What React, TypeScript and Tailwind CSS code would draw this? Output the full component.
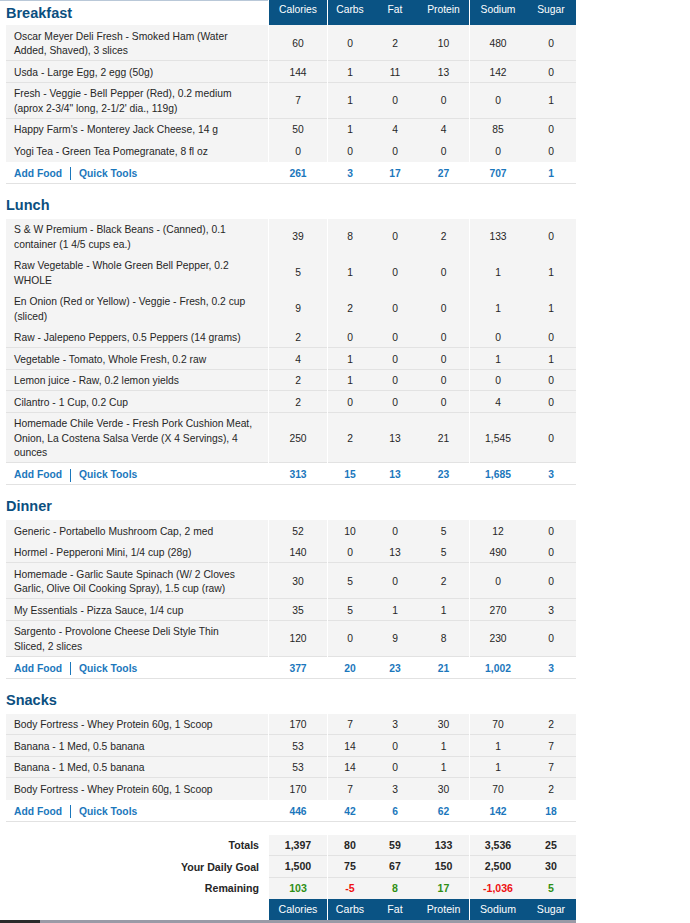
import React from 'react'

type Item = { name: string; v: (string | number)[]; line?: boolean }
type Meal = { title: string; items: Item[]; total: (string | number)[] }

const COLS = ['Calories', 'Carbs', 'Fat', 'Protein', 'Sodium', 'Sugar']

const meals: Meal[] = [
  {
    title: 'Breakfast',
    items: [
      { name: 'Oscar Meyer Deli Fresh - Smoked Ham (Water Added, Shaved), 3 slices', v: [60, 0, 2, 10, 480, 0], line: true },
      { name: 'Usda - Large Egg, 2 egg (50g)', v: [144, 1, 11, 13, 142, 0], line: true },
      { name: 'Fresh - Veggie - Bell Pepper (Red), 0.2 medium (aprox 2-3/4" long, 2-1/2\' dia., 119g)', v: [7, 1, 0, 0, 0, 1], line: true },
      { name: "Happy Farm's - Monterey Jack Cheese, 14 g", v: [50, 1, 4, 4, 85, 0] },
      { name: 'Yogi Tea - Green Tea Pomegranate, 8 fl oz', v: [0, 0, 0, 0, 0, 0] },
    ],
    total: [261, 3, 17, 27, 707, 1],
  },
  {
    title: 'Lunch',
    items: [
      { name: 'S & W Premium - Black Beans - (Canned), 0.1 container (1 4/5 cups ea.)', v: [39, 8, 0, 2, 133, 0] },
      { name: 'Raw Vegetable - Whole Green Bell Pepper, 0.2 WHOLE', v: [5, 1, 0, 0, 1, 1] },
      { name: 'En Onion (Red or Yellow) - Veggie - Fresh, 0.2 cup (sliced)', v: [9, 2, 0, 0, 1, 1] },
      { name: 'Raw - Jalepeno Peppers, 0.5 Peppers (14 grams)', v: [2, 0, 0, 0, 0, 0], line: true },
      { name: 'Vegetable - Tomato, Whole Fresh, 0.2 raw', v: [4, 1, 0, 0, 1, 1], line: true },
      { name: 'Lemon juice - Raw, 0.2 lemon yields', v: [2, 1, 0, 0, 0, 0], line: true },
      { name: 'Cilantro - 1 Cup, 0.2 Cup', v: [2, 0, 0, 0, 4, 0], line: true },
      { name: 'Homemade Chile Verde - Fresh Pork Cushion Meat, Onion, La Costena Salsa Verde (X 4 Servings), 4 ounces', v: [250, 2, 13, 21, '1,545', 0], line: true },
    ],
    total: [313, 15, 13, 23, '1,685', 3],
  },
  {
    title: 'Dinner',
    items: [
      { name: 'Generic - Portabello Mushroom Cap, 2 med', v: [52, 10, 0, 5, 12, 0] },
      { name: 'Hormel - Pepperoni Mini, 1/4 cup (28g)', v: [140, 0, 13, 5, 490, 0], line: true },
      { name: 'Homemade - Garlic Saute Spinach (W/ 2 Cloves Garlic, Olive Oil Cooking Spray), 1.5 cup (raw)', v: [30, 5, 0, 2, 0, 0], line: true },
      { name: 'My Essentials - Pizza Sauce, 1/4 cup', v: [35, 5, 1, 1, 270, 3], line: true },
      // nbsp keeps "Sliced, 2" together so the wrap falls where it does on the site
      { name: 'Sargento - Provolone Cheese Deli Style Thin Sliced,\u00a02 slices', v: [120, 0, 9, 8, 230, 0], line: true },
    ],
    total: [377, 20, 23, 21, '1,002', 3],
  },
  {
    title: 'Snacks',
    items: [
      { name: 'Body Fortress - Whey Protein 60g, 1 Scoop', v: [170, 7, 3, 30, 70, 2], line: true },
      { name: 'Banana - 1 Med, 0.5 banana', v: [53, 14, 0, 1, 1, 7], line: true },
      { name: 'Banana - 1 Med, 0.5 banana', v: [53, 14, 0, 1, 1, 7], line: true },
      { name: 'Body Fortress - Whey Protein 60g, 1 Scoop', v: [170, 7, 3, 30, 70, 2] },
    ],
    total: [446, 42, 6, 62, 142, 18],
  },
]

const totals = [1397, 80, 59, 133, 3536, 25].map((n) => n.toLocaleString('en-US'))
const goals = ['1,500', 75, 67, 150, '2,500', 30]
const remaining: { v: string; neg?: boolean }[] = [
  { v: '103' },
  { v: '-5', neg: true },
  { v: '8' },
  { v: '17' },
  { v: '-1,036', neg: true },
  { v: '5' },
]

// widths of the six number columns; a 1px white gap sits before Calories, Carbs and Sodium
const W = ['w-[58px]', 'w-[44px]', 'w-[46px]', 'w-[51px]', 'w-[56px]', 'w-[50px]']
const GAP_BEFORE = [true, true, false, false, true, false]

function Cells({ values, cls }: { values: React.ReactNode[]; cls: string }) {
  return (
    <>
      {values.map((v, i) => (
        <React.Fragment key={i}>
          {GAP_BEFORE[i] && <div className="w-px shrink-0" />}
          <div className={`${W[i]} shrink-0 flex items-center justify-center ${cls}`}>{v}</div>
        </React.Fragment>
      ))}
    </>
  )
}

function MealTable({ meal, first }: { meal: Meal; first: boolean }) {
  return (
    <div className={first ? 'w-[570px]' : 'mt-[10px] w-[570px]'}>
      <div className="flex h-[25px]">
        {first ? (
          <div className="-ml-[6px] w-[268px] shrink-0 border-t border-[#b9c8d8] pl-[6px] pt-[3.5px] text-[14.5px] font-bold leading-[17px] text-[#0b4f80]">
            {meal.title}
          </div>
        ) : (
          <div className="w-[262px] shrink-0 pt-[3px] text-[14.5px] font-bold leading-[17px] text-[#0b4f80]">
            {meal.title}
          </div>
        )}
        {first && <Cells values={COLS} cls="items-start bg-[#0a5384] pt-[2px] text-white" />}
      </div>

      {meal.items.map((it, i) => {
        const border = it.line ? 'border-[#e2e2e2]' : 'border-[#f4f4f4]'
        return (
          <div key={i} className="flex leading-[14.5px]">
            <div className={`w-[262px] shrink-0 border-b bg-[#f4f4f4] pb-[1.5px] pl-[8px] pr-[12px] pt-[4.5px] ${border}`}>
              {it.name}
            </div>
            <Cells values={it.v} cls={`border-b bg-[#f4f4f4] pt-[3px] ${border}`} />
          </div>
        )
      })}

      <div className="flex h-[22px] border-b border-[#e2e2e2] pt-[3px] font-bold text-[#1b77bc]">
        <div className="flex w-[262px] shrink-0 items-center pl-[8px]">
          <span>Add Food</span>
          <span className="mx-[8px] h-[13px] w-px bg-[#1b77bc]" />
          <span>Quick Tools</span>
        </div>
        <Cells values={meal.total} cls="" />
      </div>
    </div>
  )
}

export default function App() {
  return (
    <div className="min-h-[923px] bg-white font-['Liberation_Sans',Arial,sans-serif] text-[10.3px] text-[#262626]">
      <div className="pl-[6px]">
        {meals.map((m, i) => (
          <MealTable key={m.title} meal={m} first={i === 0} />
        ))}

        <div className="mt-[13px] text-[10.6px] font-bold">
          <div className="flex h-[21.5px]">
            <div className="flex w-[262px] shrink-0 items-center justify-end pr-[9px] pt-[2px]">Totals</div>
            <Cells values={totals} cls="border-b border-[#e2e2e2] bg-[#f4f4f4] pt-[2px]" />
          </div>
          <div className="flex h-[21.5px]">
            <div className="flex w-[262px] shrink-0 items-center justify-end pr-[9px] pt-[2px]">Your Daily Goal</div>
            <Cells values={goals} cls="border-b border-[#e2e2e2] bg-[#f4f4f4] pt-[2px]" />
          </div>
          <div className="flex h-[21.5px]">
            <div className="flex w-[262px] shrink-0 items-center justify-end pr-[9px] pt-[2px]">Remaining</div>
            <Cells
              values={remaining.map((r, i) => (
                <span key={i} className={r.neg ? 'text-[#ee1111]' : 'text-[#2f8f14]'}>
                  {r.v}
                </span>
              ))}
              cls="bg-[#f4f4f4] pt-[2px]"
            />
          </div>
          <div className="flex h-[21px] font-normal text-white">
            <div className="w-[262px] shrink-0" />
            <Cells values={COLS} cls="bg-[#0a5384] pt-[1px]" />
          </div>
        </div>
      </div>
      <div className="flex h-[3px]">
        <div className="w-[40px] bg-[#2a2a2a]" />
        <div className="w-[536px] bg-[#9a9aa6]" />
      </div>
    </div>
  )
}
